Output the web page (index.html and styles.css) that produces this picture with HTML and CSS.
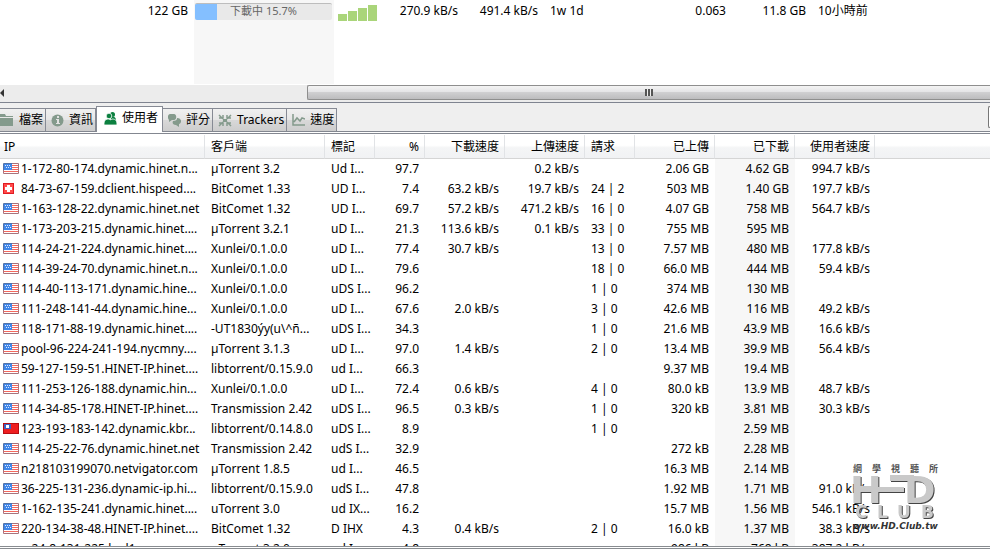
FILE: index.html
```html
<!DOCTYPE html>
<html lang="zh-Hant">
<head>
    <meta charset="UTF-8">
    <meta name="viewport" content="width=device-width, initial-scale=1.0">
    <title>Torrent</title>
    <link rel="stylesheet" href="styles.css">
</head>
<body>

    <!-- torrent list -->
    <section class="torrents">
        <table class="grid torrent-table">
            <colgroup>
                <col class="w-size"><col class="w-status"><col class="w-signal"><col class="w-rate"><col class="w-rate">
                <col class="w-eta"><col class="w-ratio"><col class="w-rate"><col>
            </colgroup>
            <tr>
                <td class="num">122 GB</td>
                <td class="status">
                    <div class="bar" role="progressbar" aria-valuenow="15.7">
                        <div class="bar-fill" style="width: 15.7%"></div>
                        <span class="bar-text">下載中 15.7%</span>
                    </div>
                </td>
                <td class="signal">
                    <svg width="40" height="16" viewBox="0 0 40 16"><path fill="#aad57a" d="M0 9h9v7H0zM10 6h9v10h-9zM20 3h9v13h-9zM30 0h9v16h-9z"/></svg>
                </td>
                <td class="num">270.9 kB/s</td>
                <td class="num">491.4 kB/s</td>
                <td>1w 1d</td>
                <td class="num">0.063</td>
                <td class="num">11.8 GB</td>
                <td>10小時前</td>
            </tr>
        </table>
    </section>

    <div class="scrollbar">
        <span class="arrow"></span>
        <div class="thumb"><span class="grip"></span></div>
    </div>

    <nav class="tabs">
        <button class="tab">
            <svg width="14" height="12" viewBox="0 0 14 12"><path fill="#849a8c" d="M0 0h5l1 2h7v1H0zM0 4h13v8H0z"/></svg>
            檔案
        </button>
        <button class="tab">
            <svg width="13" height="13" viewBox="0 0 13 13"><circle cx="6.500" cy="6.500" r="6" fill="#849a8c"/><path fill="#e2e2e2" d="M5 5h3v4h1v1H5V9h1V6H5zM6 2h2v2H6z"/></svg>
            資訊
        </button>
        <button class="tab active">
            <svg width="13" height="13" viewBox="0 0 13 13"><g fill="#0c8040"><circle cx="8.500" cy="2.500" r="2.500"/><path d="M7 5c5-1 5 2 5 5H7z"/><g stroke="#fff" stroke-width=".8"><circle cx="5" cy="4" r="2.800"/><path d="M0 13c0-4 1-6 5-6 1 1 2 1 3 0 4 0 5 2 5 6z"/></g></g></svg>
            使用者
        </button>
        <button class="tab">
            <svg width="13" height="13" viewBox="0 0 13 13"><path fill="#849a8c" d="M2 0h4c3 0 3 6 0 6H4L1 8V6C-1 4 0 0 2 0zM9 4c5 0 5 5 2 6v3l-3-2c-3 0-4-2-3-4 3 0 4-1 4-3z"/></svg>
            評分
        </button>
        <button class="tab">
            <svg width="14" height="13" viewBox="0 0 14 13"><g fill="none" stroke="#849a8c" stroke-width="1.500"><path d="M1 1l4 4M13 1L9 5M1 12l4-4M13 12L9 8M1 4h4V1M13 4H9V1M1 9h4v3M13 9H9v3"/></g><path fill="#849a8c" d="M5 5h4v3H5z"/></svg>
            Trackers
        </button>
        <button class="tab">
            <svg width="13" height="12" viewBox="0 0 13 12"><path fill="none" stroke="#849a8c" stroke-width="1.500" d="M1 0v11h12M2 8l3-4 3 3 2-3 3 1"/></svg>
            速度
        </button>
        <button class="more" aria-label="more"></button>
    </nav>

    <!-- peers, rows are filled by script.js -->
    <section class="peers">
        <table class="grid peer-table">
            <colgroup>
                <col class="w-ip"><col class="w-client"><col class="w-small"><col class="w-small"><col class="w-rate">
                <col class="w-rate"><col class="w-small"><col class="w-rate"><col class="w-rate"><col class="w-rate"><col>
            </colgroup>
            <thead>
                <tr>
                    <th>IP</th><th>客戶端</th><th>標記</th><th class="num">%</th><th class="num">下載速度</th>
                    <th class="num">上傳速度</th><th>請求</th><th class="num">已上傳</th><th class="num">已下載</th>
                    <th class="num">使用者速度</th><th></th>
                </tr>
            </thead>
            <tbody id="peers"></tbody>
        </table>
    </section>

    <svg class="watermark" width="92" height="70" viewBox="0 0 92 70">
        <text class="wm-top" x="3 22 41 60 79" y="10">網學視聽所</text>
        <g class="wm-face">
            <path d="M10 25h44v5H10zM40 13h24v6H40z"/>
            <text class="wm-hd" x="0 54" y="41">HD</text>
            <text class="wm-club" x="5 27 47 71" y="56">CLUB</text>
        </g>
        <text class="wm-url" x="3" y="67">www.HD.Club.tw</text>
    </svg>

    <!-- flags -->
    <svg class="defs" width="0" height="0">
        <symbol id="us" viewBox="0 0 16 11">
            <path fill="#fff" d="M0 0h16v11H0z"/>
            <path stroke="#f4685e" d="M0 2.500h16M0 4.500h16M0 6.500h16M0 8.500h16"/>
            <path fill="#3f86e8" d="M1 1h8v6H1z"/>
            <path fill="#dce8ff" d="M2 2h1v1H2zM4 2h1v1H4zM6 2h1v1H6zM3 4h1v1H3zM5 4h1v1H5zM7 4h1v1H7z"/>
            <path fill="none" stroke="#a8727c" d="M9 .5h6.500v10H.5V7"/>
            <path fill="none" stroke="#5272a8" d="M9 .5H.5V7"/>
        </symbol>
        <symbol id="ch" viewBox="0 0 16 11">
            <path fill="#e01b22" d="M0 0h11v11H0z"/>
            <path fill="#ff4a4a" d="M1 1h9v9H1z"/>
            <path fill="#fff" d="M4 2h3v2h2v3H7v2H4V7H2V4h2z"/>
        </symbol>
        <symbol id="tw" viewBox="0 0 16 11">
            <path fill="#b80d12" d="M0 0h16v11H0z"/>
            <path fill="#ee1f20" d="M1 1h14v9H1z"/>
            <path fill="#3b62c4" d="M1 1h7v5H1z"/>
            <path fill="#fff" d="M3 2h3v3H3z"/>
        </symbol>
    </svg>

    <script src="script.js"></script>
</body>
</html>
```
FILE: styles.css
```css
* {
    box-sizing: border-box;
}

body {
    display: flex;
    flex-direction: column;
    height: 100vh;
    margin: 0;
    overflow: hidden;
    background-color: #fff;
    color: #000;
    font-family: "Noto Sans", "Noto Sans CJK TC", sans-serif;
    font-size: 12px;
    line-height: 16px;
}

/* tables */
.grid {
    width: 100%;
    table-layout: fixed;
    border-collapse: separate;
    border-spacing: 0;
}

.grid td,
.grid th {
    padding: 0 6px;
    overflow: hidden;
    white-space: nowrap;
    text-align: left;
    font-weight: normal;
}

.grid .num {
    text-align: right;
}

.w-size { width: 194px; }
.w-status { width: 140px; }
.w-signal { width: 50px; }
.w-rate { width: 80px; }
.w-eta { width: 100px; }
.w-ratio { width: 88px; }
.w-ip { width: 205px; }
.w-client { width: 120px; }
.w-small { width: 50px; }

/* torrent list */
.torrents {
    height: 85px;
    flex: none;
}

.torrent-table td {
    height: 84px;
    padding-top: 3px;
    vertical-align: top;
}

.torrent-table .status {
    padding: 3px 2px 0 1px;
    background-color: #f7f7f7;
}

.torrent-table .signal {
    padding: 5px 4px 0;
}

.bar {
    position: relative;
    height: 17px;
    overflow: hidden;
    border-top: 1px solid #bdbdbd;
    border-radius: 2px;
    background-color: #e9e9e9;
    color: #666;
    font-size: 11px;
    line-height: 13px;
    text-align: center;
}

.bar-fill {
    position: absolute;
    top: 0;
    left: 0;
    height: 100%;
    background-color: #84bfff;
}

.bar-text {
    position: relative;
}

/* scrollbar */
.scrollbar {
    display: flex;
    flex: none;
    align-items: center;
    height: 17px;
    padding-bottom: 2px;
    background-color: #ececec;
}

.arrow {
    margin-right: auto;
    border: 4px solid transparent;
    border-right-color: #333;
    border-left: 0;
}

.thumb {
    display: flex;
    align-items: center;
    justify-content: center;
    width: 69%;
    height: 15px;
    border: 1px solid #8e8e8e;
    border-right: 0;
    border-radius: 2px 0 0 2px;
    background: linear-gradient(#f4f4f4, #e4e4e6 45%, #cfcfd1 50%, #bcbcbe);
}

.grip {
    width: 8px;
    height: 7px;
    background: repeating-linear-gradient(90deg, #555 0 2px, #eee 2px 3px);
}

/* tabs */
.tabs {
    display: flex;
    flex: none;
    align-items: flex-end;
    height: 30px;
    border-top: 1px solid #7f8490;
    border-bottom: 1px solid #838790;
    background-color: #efefef;
}

.tab {
    display: flex;
    align-items: center;
    gap: 5px;
    height: 23px;
    padding: 0 2px 0 5px;
    border: 1px solid #868a94;
    border-left: 0;
    border-bottom: 0;
    background: linear-gradient(#f0f0f0, #e6e6e6 48%, #d8d8d8 52%, #cdcdcd);
    color: #000;
    font: inherit;
    white-space: nowrap;
}

.tab:first-child {
    padding-left: 0;
}

.tab.active {
    height: 26px;
    margin-bottom: -1px;
    padding: 0 4px 3px 7px;
    border-left: 1px solid #868a94;
    background: #fff;
}

.more {
    align-self: center;
    width: 2px;
    height: 22px;
    margin-left: auto;
    padding: 0;
    border: 1px solid #777;
    border-right: 0;
    border-radius: 3px 0 0 3px;
    background-color: #fff;
}

/* peers */
.peers {
    flex: 1;
    min-height: 0;
    margin-top: 1px;
    padding-top: 1px;
    overflow: hidden;
    border-top: 1px solid #838790;
    border-bottom: 3px double #888c90;
}

.peer-table th {
    height: 24px;
    border-right: 1px solid #e1e3e6;
    border-bottom: 1px solid #d5d5d5;
    background: linear-gradient(#fff 45%, #f4f5f6 55%, #f1f2f4);
}

.peer-table th.num {
    padding-right: 5px;
}

.peer-table th:last-child {
    border-right: 0;
}

.peer-table th:first-child {
    padding-left: 4px;
}

.peer-table td {
    height: 20px;
}

.peer-table td:first-child {
    padding: 0 0 0 3px;
}

.peer-table td:nth-child(9) {
    background-color: #f7f7f7;
}

.peer-table td:nth-child(10) {
    padding-right: 5px;
}

.peer-table th:nth-child(10) {
    padding-right: 4px;
}

.host {
    display: flex;
    align-items: center;
    gap: 2px;
}

.flag {
    flex: none;
    width: 16px;
    height: 11px;
    margin-bottom: 1px;
}

.defs {
    position: absolute;
}

/* logo over the list */
.watermark {
    position: absolute;
    right: 48px;
    bottom: 17px;
    font-family: "DejaVu Sans", "Noto Sans CJK TC", sans-serif;
    font-weight: bold;
}

.wm-face {
    fill: #c9c9c9;
    filter: drop-shadow(1px 1px 0 #444);
}

.wm-hd { font-size: 38px; }
.wm-club { font-size: 17px; }

.wm-top {
    fill: #555;
    font-size: 9px;
}

.wm-url {
    fill: #333;
    font-size: 9px;
    font-style: italic;
}
```
FILE: script.js
```javascript
// flag, host, client, flags, percent, down, up, requests, uploaded, downloaded, peer speed
const peers = [
    ['us', '1-172-80-174.dynamic.hinet.n...', 'µTorrent 3.2', 'Ud I...', '97.7', '', '0.2 kB/s', '', '2.06 GB', '4.62 GB', '994.7 kB/s'],
    ['ch', '84-73-67-159.dclient.hispeed....', 'BitComet 1.33', 'UD I...', '7.4', '63.2 kB/s', '19.7 kB/s', '24 | 2', '503 MB', '1.40 GB', '197.7 kB/s'],
    ['us', '1-163-128-22.dynamic.hinet.net', 'BitComet 1.32', 'UD I...', '69.7', '57.2 kB/s', '471.2 kB/s', '16 | 0', '4.07 GB', '758 MB', '564.7 kB/s'],
    ['us', '1-173-203-215.dynamic.hinet....', 'µTorrent 3.2.1', 'uD I...', '21.3', '113.6 kB/s', '0.1 kB/s', '33 | 0', '755 MB', '595 MB', ''],
    ['us', '114-24-21-224.dynamic.hinet....', 'Xunlei/0.1.0.0', 'uD I...', '77.4', '30.7 kB/s', '', '13 | 0', '7.57 MB', '480 MB', '177.8 kB/s'],
    ['us', '114-39-24-70.dynamic.hinet.n...', 'Xunlei/0.1.0.0', 'uD I...', '79.6', '', '', '18 | 0', '66.0 MB', '444 MB', '59.4 kB/s'],
    ['us', '114-40-113-171.dynamic.hine...', 'Xunlei/0.1.0.0', 'uDS I...', '96.2', '', '', '1 | 0', '374 MB', '130 MB', ''],
    ['us', '111-248-141-44.dynamic.hine...', 'Xunlei/0.1.0.0', 'uD I...', '67.6', '2.0 kB/s', '', '3 | 0', '42.6 MB', '116 MB', '49.2 kB/s'],
    ['us', '118-171-88-19.dynamic.hinet....', '-UT1830ýy(u\\^ñ...', 'uDS I...', '34.3', '', '', '1 | 0', '21.6 MB', '43.9 MB', '16.6 kB/s'],
    ['us', 'pool-96-224-241-194.nycmny....', 'µTorrent 3.1.3', 'uD I...', '97.0', '1.4 kB/s', '', '2 | 0', '13.4 MB', '39.9 MB', '56.4 kB/s'],
    ['us', '59-127-159-51.HINET-IP.hinet....', 'libtorrent/0.15.9.0', 'ud I...', '66.3', '', '', '', '9.37 MB', '19.4 MB', ''],
    ['us', '111-253-126-188.dynamic.hin...', 'Xunlei/0.1.0.0', 'uD I...', '72.4', '0.6 kB/s', '', '4 | 0', '80.0 kB', '13.9 MB', '48.7 kB/s'],
    ['us', '114-34-85-178.HINET-IP.hinet....', 'Transmission 2.42', 'uDS I...', '96.5', '0.3 kB/s', '', '1 | 0', '320 kB', '3.81 MB', '30.3 kB/s'],
    ['tw', '123-193-183-142.dynamic.kbr...', 'libtorrent/0.14.8.0', 'uDS I...', '8.9', '', '', '1 | 0', '', '2.59 MB', ''],
    ['us', '114-25-22-76.dynamic.hinet.net', 'Transmission 2.42', 'udS I...', '32.9', '', '', '', '272 kB', '2.28 MB', ''],
    ['us', 'n218103199070.netvigator.com', 'µTorrent 1.8.5', 'ud I...', '46.5', '', '', '', '16.3 MB', '2.14 MB', ''],
    ['us', '36-225-131-236.dynamic-ip.hi...', 'libtorrent/0.15.9.0', 'udS I...', '47.8', '', '', '', '1.92 MB', '1.71 MB', '91.0 kB/s'],
    ['us', '1-162-135-241.dynamic.hinet....', 'uTorrent 3.0', 'ud IX...', '16.2', '', '', '', '15.7 MB', '1.56 MB', '546.1 kB/s'],
    ['us', '220-134-38-48.HINET-IP.hinet....', 'BitComet 1.32', 'D IHX', '4.3', '0.4 kB/s', '', '2 | 0', '16.0 kB', '1.37 MB', '38.3 kB/s'],
    ['', 'a-24-8-131-225.hsd1....', 'µTorrent 3.2.0', 'ud I...', '4.8', '', '', '', '986 kB', '768 kB', '387.2 kB/s']
];

const numeric = [4, 5, 6, 8, 9, 10];
const body = document.getElementById('peers');

peers.forEach((peer) => {
    const row = body.insertRow();
    const host = row.insertCell();
    host.innerHTML = `<div class="host"><svg class="flag"><use href="#${peer[0]}"/></svg><span>${peer[1]}</span></div>`;

    for (let i = 2; i < peer.length; i++) {
        const cell = row.insertCell();
        cell.textContent = peer[i];
        if (numeric.includes(i)) cell.className = 'num';
    }
    row.insertCell();
});
```
